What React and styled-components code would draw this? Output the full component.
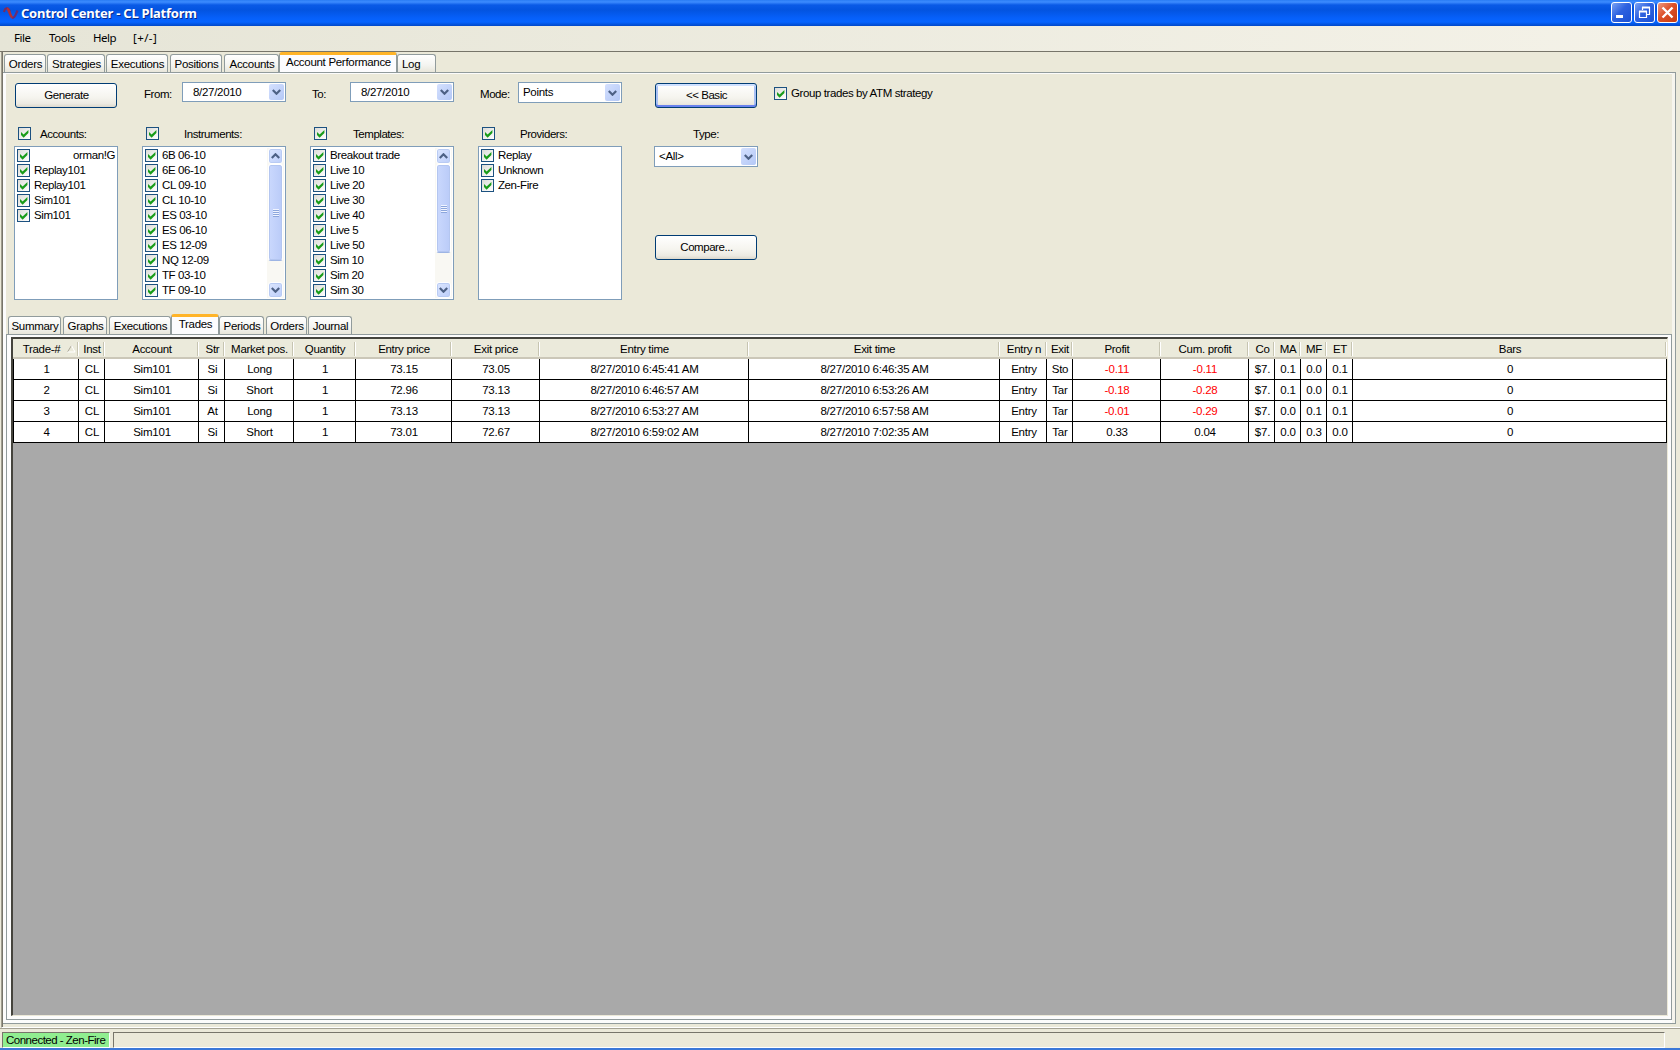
import React, {useState} from "react";
import styled, {createGlobalStyle, css} from "styled-components";

const topTabs = [
    {label: "Orders", width: 42, gap: 1},
    {label: "Strategies", width: 58, gap: 1},
    {label: "Executions", width: 62, gap: 2},
    {label: "Positions", width: 52, gap: 2},
    {label: "Accounts", width: 55, gap: 0},
    {label: "Account Performance", width: 118, gap: 0},
    {label: "Log", width: 39, gap: 0, left: true},
];

const reportTabs = [
    {label: "Summary", width: 53, gap: 2},
    {label: "Graphs", width: 44, gap: 2},
    {label: "Executions", width: 62, gap: 0},
    {label: "Trades", width: 48, gap: 0},
    {label: "Periods", width: 45, gap: 2},
    {label: "Orders", width: 41, gap: 1},
    {label: "Journal", width: 44, gap: 0},
];

const accounts = ["orman!G", "Replay101", "Replay101", "Sim101", "Sim101"];
const instruments = [
    "6B 06-10", "6E 06-10", "CL 09-10", "CL 10-10", "ES 03-10",
    "ES 06-10", "ES 12-09", "NQ 12-09", "TF 03-10", "TF 09-10",
];
const templates = [
    "Breakout trade", "Live 10", "Live 20", "Live 30", "Live 40",
    "Live 5", "Live 50", "Sim 10", "Sim 20", "Sim 30",
];
const providers = ["Replay", "Unknown", "Zen-Fire"];

const columns = [
    {label: "Trade-#", width: 65, sorted: true},
    {label: "Inst", width: 26},
    {label: "Account", width: 94},
    {label: "Str", width: 26, shift: 1},
    {label: "Market pos.", width: 69},
    {label: "Quantity", width: 62},
    {label: "Entry price", width: 96},
    {label: "Exit price", width: 88},
    {label: "Entry time", width: 209},
    {label: "Exit time", width: 251},
    {label: "Entry n", width: 47, shift: 1},
    {label: "Exit", width: 26, shift: 0},
    {label: "Profit", width: 88},
    {label: "Cum. profit", width: 88},
    {label: "Co", width: 26, shift: 1},
    {label: "MA", width: 26},
    {label: "MF", width: 26},
    {label: "ET", width: 26},
    {label: "Bars", width: 314},
];

const trades = [
    ["1", "CL", "Sim101", "Si", "Long", "1", "73.15", "73.05", "8/27/2010 6:45:41 AM", "8/27/2010 6:46:35 AM", "Entry", "Sto", "-0.11", "-0.11", "$7.", "0.1", "0.0", "0.1", "0"],
    ["2", "CL", "Sim101", "Si", "Short", "1", "72.96", "73.13", "8/27/2010 6:46:57 AM", "8/27/2010 6:53:26 AM", "Entry", "Tar", "-0.18", "-0.28", "$7.", "0.1", "0.0", "0.1", "0"],
    ["3", "CL", "Sim101", "At", "Long", "1", "73.13", "73.13", "8/27/2010 6:53:27 AM", "8/27/2010 6:57:58 AM", "Entry", "Tar", "-0.01", "-0.29", "$7.", "0.0", "0.1", "0.1", "0"],
    ["4", "CL", "Sim101", "Si", "Short", "1", "73.01", "72.67", "8/27/2010 6:59:02 AM", "8/27/2010 7:02:35 AM", "Entry", "Tar", "0.33", "0.04", "$7.", "0.0", "0.3", "0.0", "0"],
];

function Check({defaultChecked = true}) {
    const [checked, setChecked] = useState(defaultChecked);

    return (
        <CheckBox role="checkbox" aria-checked={checked} onClick={() => setChecked(!checked)}>
            {checked && (
                <svg width="9" height="9" viewBox="0 0 9 9">
                    <path d="M1 3v3l2.6 2.8L8.4 4V0.9L3.6 5.5z" fill="#1a9c1a"/>
                </svg>
            )}
        </CheckBox>
    );
}

function Chevron({up}) {
    return (
        <svg width="9" height="6" viewBox="0 0 9 6">
            <path d={up ? "M0.8 5L4.5 1.3L8.2 5" : "M0.8 1L4.5 4.7L8.2 1"} fill="none" stroke="#4d6185" strokeWidth="2.2"/>
        </svg>
    );
}

function Select({value, indent, height}) {
    return (
        <SelectBox $height={height}>
            <SelectValue $indent={indent}>{value}</SelectValue>
            <SelectArrow><Chevron/></SelectArrow>
        </SelectBox>
    );
}

function CheckList({items, width, thumb, masked}) {
    return (
        <ListBox $width={width}>
            <ListItems>
                {items.map((item, i) => (
                    <ListItem key={i} $masked={masked && i === 0}>
                        <Check/>
                        <ItemText>{item}</ItemText>
                    </ListItem>
                ))}
            </ListItems>
            {thumb && (
                <ScrollTrack>
                    <ScrollButton><Chevron up/></ScrollButton>
                    <ScrollThumb $height={thumb}><Grip/></ScrollThumb>
                    <ScrollSpace/>
                    <ScrollButton><Chevron/></ScrollButton>
                </ScrollTrack>
            )}
        </ListBox>
    );
}

function Tabs({tabs, active, onChange}) {
    return (
        <TabStrip>
            {tabs.map((tab) => (
                <Tab
                    key={tab.label}
                    $width={tab.width}
                    $gap={tab.gap}
                    $left={tab.left}
                    $active={tab.label === active}
                    onClick={() => onChange(tab.label)}
                >
                    {tab.label}
                </Tab>
            ))}
        </TabStrip>
    );
}

function App() {
    const [tab, setTab] = useState("Account Performance");
    const [report, setReport] = useState("Trades");

    return (
        <Window>
            <GlobalStyle/>
            <TitleBar>
                <svg width="16" height="14" viewBox="0 0 16 14">
                    <path d="M1 6C2 1.5 5 0.5 7 5.5" fill="none" stroke="#7a2a5c" strokeWidth="2"/>
                    <path d="M4 2.5C6.5 3 7 11.5 10 11.8" fill="none" stroke="#b03038" strokeWidth="2.6"/>
                    <path d="M9.5 11.8C12 12 12.5 9 14.5 4.5" fill="none" stroke="#6a2c72" strokeWidth="2.2"/>
                </svg>
                <Title>Control Center - CL Platform</Title>
                <WindowButton>
                    <svg width="19" height="19" viewBox="0 0 19 19">
                        <rect x="4" y="12" width="7" height="3" fill="#fff"/>
                    </svg>
                </WindowButton>
                <WindowButton>
                    <svg width="19" height="19" viewBox="0 0 19 19" fill="none" stroke="#fff">
                        <path d="M7.5 7V4.5H14.5V11.5H12" strokeWidth="1.2"/>
                        <path d="M7 4.5H15" strokeWidth="2"/>
                        <path d="M4.5 8.5H11.5V14.5H4.5z" strokeWidth="1.2"/>
                        <path d="M4 8.5H12" strokeWidth="2"/>
                    </svg>
                </WindowButton>
                <WindowButton $close>
                    <svg width="19" height="19" viewBox="0 0 19 19">
                        <path d="M4.5 4.5L14.5 14.5M14.5 4.5L4.5 14.5" stroke="#fff" strokeWidth="2.4"/>
                    </svg>
                </WindowButton>
            </TitleBar>
            <MenuBar>
                <MenuItem $width={35}>File</MenuItem>
                <MenuItem $width={44}>Tools</MenuItem>
                <MenuItem $width={40}>Help</MenuItem>
                <MenuItem $width={40} $wide>[+/-]</MenuItem>
            </MenuBar>

            <Main>
                <Tabs tabs={topTabs} active={tab} onChange={setTab}/>
                <Page>
                    <Filters>
                        <FilterColumn $width={104}>
                            <ControlRow $inset><Button>Generate</Button></ControlRow>
                            <LabelRow $indent={9}><Check/><span>Accounts:</span></LabelRow>
                            <CheckList items={accounts} width={104} masked/>
                        </FilterColumn>
                        <FilterColumn $width={144}>
                            <ControlRow><Caption>From:</Caption><Select value="8/27/2010" indent={9} height={20}/></ControlRow>
                            <LabelRow $indent={25}><Check/><span>Instruments:</span></LabelRow>
                            <CheckList items={instruments} width={144} thumb={97}/>
                        </FilterColumn>
                        <FilterColumn $width={144}>
                            <ControlRow><Caption>To:</Caption><Select value="8/27/2010" indent={9} height={20}/></ControlRow>
                            <LabelRow $indent={26}><Check/><span>Templates:</span></LabelRow>
                            <CheckList items={templates} width={144} thumb={89}/>
                        </FilterColumn>
                        <FilterColumn $width={144}>
                            <ControlRow><Caption>Mode:</Caption><Select value="Points" indent={3} height={21}/></ControlRow>
                            <LabelRow $indent={25}><Check/><span>Providers:</span></LabelRow>
                            <CheckList items={providers} width={144}/>
                        </FilterColumn>
                        <FilterColumn $width={104} $gap={32}>
                            <ControlRow $inset><Button $focused>&lt;&lt; Basic</Button></ControlRow>
                            <TypeLabel>Type:</TypeLabel>
                            <Select value="<All>" indent={3} height={21}/>
                            <CompareRow><Button>Compare...</Button></CompareRow>
                        </FilterColumn>
                        <GroupOption><Check/><ItemText>Group trades by ATM strategy</ItemText></GroupOption>
                    </Filters>

                    <Tabs tabs={reportTabs} active={report} onChange={setReport}/>
                    <ReportPage>
                        <Grid>
                            <HeaderRow>
                                {columns.map((col) => (
                                    <HeaderCell key={col.label} $width={col.width} $shift={col.shift} $sorted={col.sorted}>
                                        {col.label}
                                        {col.sorted && (
                                            <svg width="9" height="8" viewBox="0 0 9 8">
                                                <path d="M0.5 7L4.5 0.5" stroke="#aca899" fill="none"/>
                                                <path d="M4.5 0.5L8 7H0.5" stroke="#fff" fill="none"/>
                                            </svg>
                                        )}
                                    </HeaderCell>
                                ))}
                            </HeaderRow>
                            {trades.map((trade) => (
                                <Row key={trade[0]}>
                                    {trade.map((value, i) => (
                                        <Cell key={i} $width={columns[i].width} $shift={columns[i].shift} $loss={value.startsWith("-")}>
                                            {value}
                                        </Cell>
                                    ))}
                                </Row>
                            ))}
                        </Grid>
                    </ReportPage>
                </Page>
            </Main>

            <StatusBar>
                <Connection>Connected - Zen-Fire</Connection>
                <StatusSpace/>
            </StatusBar>
        </Window>
    );
}

export default App;

const GlobalStyle = createGlobalStyle`
    * {
        box-sizing: border-box;
    }

    body {
        margin: 0;
        background: #ece9d8;
    }

    svg {
        display: block;
        flex: none;
    }
`;

const Window = styled.div`
    display: flex;
    flex-direction: column;
    width: 1680px;
    height: 1050px;
    overflow: hidden;
    background: #ebe9d9;
    border-bottom: 2px solid #3b78d8;
    font-family: "Liberation Sans", Arial, sans-serif;
    font-size: 11.5px;
    letter-spacing: -0.45px;
    line-height: 14px;
    color: #000;
    white-space: nowrap;
    cursor: default;
    user-select: none;
`;

const TitleBar = styled.header`
    display: flex;
    align-items: center;
    flex: none;
    gap: 2px;
    height: 26px;
    padding: 0 2px 1px 3px;
    background: linear-gradient(#2a7cf4 0, #3d8cff 2px, #0a5ae6 5px, #0354e0 10px, #0660fa 18px, #0664ff 22px, #0148c8 26px);
`;

const Title = styled.h1`
    flex: 1;
    margin: 0;
    font: bold 13px/16px "Noto Sans", sans-serif;
    letter-spacing: -0.23px;
    color: #fff;
    text-shadow: 1px 1px #0a2a8c;
`;

const WindowButton = styled.div`
    width: 21px;
    height: 21px;
    border: 1px solid #fff;
    border-radius: 3px;
    background: ${({$close}) => $close
        ? "linear-gradient(135deg, #ee9a80, #dc5028 45%, #c83c10)"
        : "linear-gradient(135deg, #7aa2f4, #2e62e0 45%, #1a50d4)"};
`;

const MenuBar = styled.nav`
    display: flex;
    align-items: center;
    flex: none;
    height: 26px;
    padding: 0 0 1px 14px;
    border-bottom: 1px solid #77756a;
    background: linear-gradient(90deg, #e6e5d7, #f4f2e8);
    font-family: "Noto Sans", sans-serif;
`;

const MenuItem = styled.span`
    width: ${({$width}) => $width}px;
    letter-spacing: ${({$wide}) => ($wide ? "0.4px" : "-0.45px")};
`;

const Main = styled.main`
    display: flex;
    flex-direction: column;
    flex: 1;
    min-height: 0;
    margin-left: 1px;
    padding-right: 4px;
    padding-bottom: 3px;
    border-left: 1px solid #a09d8f;
    border-bottom: 1px solid #fff;
    box-shadow: inset 1px 0 #77756a;
`;

const TabStrip = styled.div`
    display: flex;
    align-items: flex-end;
    flex: none;
    height: 20px;
    padding-left: 2px;
`;

const Tab = styled.div`
    width: ${({$width}) => $width}px;
    height: 18px;
    margin-right: ${({$gap}) => $gap}px;
    padding: ${({$left}) => ($left ? "2px 0 0 4px" : "2px 0 0 1px")};
    border: 1px solid #919b9c;
    border-bottom: none;
    border-radius: 3px 3px 0 0;
    background: linear-gradient(#fff, #f4f4f0 60%, #e8e6da);
    letter-spacing: -0.3px;
    text-align: ${({$left}) => ($left ? "left" : "center")};

    ${({$active}) => $active && css`
        height: 21px;
        margin-bottom: -1px;
        padding-top: 0;
        border-top: 3px solid #ffb428;
        background: #fcfcfe;
    `}
`;

const Page = styled.section`
    display: flex;
    flex-direction: column;
    flex: 1;
    min-height: 0;
    margin-left: 1px;
    padding: 1px 3px 3px;
    border: 1px solid #919b9c;
    border-left: none;
    box-shadow: inset 3px 0 #fcfcfc, inset -3px 0 #f6f5ee, inset 0 -3px #fcfcfc, inset 0 1px #fcfcfc;
`;

const Filters = styled.div`
    display: flex;
    align-items: flex-start;
    flex: none;
    height: 240px;
    padding: 8px 0 0 8px;
`;

const FilterColumn = styled.div`
    display: flex;
    flex-direction: column;
    width: ${({$width}) => $width}px;
    margin-left: ${({$gap}) => $gap || 24}px;

    &:first-child {
        margin-left: 0;
    }
`;

const ControlRow = styled.div`
    display: flex;
    align-items: flex-start;
    height: 45px;
    padding: ${({$inset}) => ($inset ? "1px 1px 0" : "0 0 0 2px")};
`;

const Caption = styled.label`
    width: 38px;
    padding-top: 5px;
`;

const Button = styled.button`
    width: 102px;
    height: 25px;
    padding: 0 0 2px 1px;
    border: 1px solid #003c74;
    border-radius: 3px;
    background: linear-gradient(#fff, #f5f4ee 60%, #eceae2 85%, #dcd8cc);
    font: inherit;
    letter-spacing: inherit;
    color: #000;

    ${({$focused}) => $focused && css`
        box-shadow: inset 0 2px #cee0ff, inset 0 -2px #6982ee, inset 2px 0 #a8c0f4, inset -2px 0 #a8c0f4;
    `}
`;

const SelectBox = styled.div`
    display: flex;
    flex: none;
    width: 104px;
    height: ${({$height}) => $height}px;
    padding: 1px;
    border: 1px solid #7f9db9;
    background: #fff;
`;

const SelectValue = styled.span`
    flex: 1;
    padding: 1px 0 0 ${({$indent}) => $indent}px;
    letter-spacing: -0.3px;
`;

const SelectArrow = styled.span`
    display: flex;
    align-items: center;
    justify-content: center;
    width: 15px;
    border-radius: 2px;
    background: linear-gradient(135deg, #d4e0fe, #b4c8f6);
`;

const LabelRow = styled.div`
    display: flex;
    align-items: center;
    gap: ${({$indent}) => $indent}px;
    height: 13px;
    margin-bottom: 6px;
    padding-left: 4px;
`;

const CheckBox = styled.span`
    display: flex;
    align-items: center;
    justify-content: center;
    flex: none;
    width: 13px;
    height: 13px;
    border: 1px solid #1c5180;
    background: linear-gradient(135deg, #dcdcd7, #fff);
`;

const ListBox = styled.div`
    display: flex;
    width: ${({$width}) => $width}px;
    height: 154px;
    padding: 1px;
    border: 1px solid #7f9db9;
    background: #fff;
`;

const ListItems = styled.div`
    flex: 1;
    padding: 1px 0 0 1px;
`;

const ListItem = styled.div`
    display: flex;
    align-items: flex-start;
    gap: 4px;
    height: 15px;

    ${({$masked}) => $masked && css`
        justify-content: space-between;
        padding-right: 1px;
    `}
`;

const ItemText = styled.span`
    margin-top: -1px;
    letter-spacing: -0.4px;
`;

const ScrollTrack = styled.div`
    display: flex;
    flex-direction: column;
    width: 17px;
    padding: 0 1px;
    background: #f9f8f3;
`;

const ScrollButton = styled.div`
    display: flex;
    align-items: center;
    justify-content: center;
    flex: none;
    height: 16px;
    border: 1px solid #fff;
    border-radius: 3px;
    box-shadow: inset 0 0 0 1px #b9cbf3;
    background: linear-gradient(135deg, #dce6fe, #bccefa);
`;

const ScrollThumb = styled.div`
    display: flex;
    align-items: center;
    justify-content: center;
    flex: none;
    height: ${({$height}) => $height}px;
    border: 1px solid #fff;
    border-bottom-color: #9db4e4;
    border-radius: 3px;
    box-shadow: inset 0 0 0 1px #b4c6f0;
    background: linear-gradient(90deg, #cad8fd, #bacbf8);
`;

const Grip = styled.div`
    width: 6px;
    height: 8px;
    background: repeating-linear-gradient(#f0f4ff 0 1px, #8ca6dc 1px 2px);
`;

const ScrollSpace = styled.div`
    flex: 1;
`;

const TypeLabel = styled.div`
    height: 19px;
    text-align: center;
`;

const CompareRow = styled.div`
    margin-top: 68px;
    padding: 0 1px;
`;

const GroupOption = styled.div`
    display: flex;
    align-items: center;
    gap: 4px;
    height: 13px;
    margin: 5px 0 0 16px;
`;

const ReportPage = styled.section`
    flex: 1;
    min-height: 0;
    padding: 2px 3px 3px 4px;
    border: 1px solid #919b9c;
    background: #fcfcfc;
`;

const Grid = styled.div`
    height: 100%;
    border-style: solid;
    border-width: 2px 1px 1px 2px;
    border-color: #45443d #ece9d8 #ece9d8 #45443d;
    background: #a9a9a9;
`;

const HeaderRow = styled.div`
    display: flex;
    height: 20px;
    padding-left: 1px;
    border-bottom: 2px solid #cbc7b8;
    background: #ebeadb;
`;

const HeaderCell = styled.div`
    display: flex;
    align-items: center;
    justify-content: center;
    flex: none;
    gap: 7px;
    width: ${({$width}) => $width}px;
    height: 14px;
    margin-top: 3px;
    padding-left: ${({$shift = 0, $sorted}) => ($sorted ? 7 : $shift + 1)}px;
    border-right: 1px solid #fff;
    box-shadow: inset -1px 0 #c7c5b2;
    letter-spacing: -0.3px;
`;

const Row = styled.div`
    display: flex;
    height: 21px;
    border-left: 1px solid #000;
    border-bottom: 1px solid #000;
    background: #fff;
`;

const Cell = styled.div`
    flex: none;
    width: ${({$width}) => $width}px;
    padding: 3px 0 0 ${({$shift = 0}) => $shift + 1}px;
    border-right: 1px solid #000;
    overflow: hidden;
    text-align: center;
    letter-spacing: -0.22px;
    color: ${({$loss}) => ($loss ? "#f00" : "#000")};
`;

const StatusBar = styled.footer`
    display: flex;
    flex: none;
    gap: 3px;
    height: 20px;
    padding: 3px 15px 0 2px;
    border-top: 1px solid #a5a294;
`;

const Connection = styled.div`
    width: 108px;
    padding-left: 3px;
    border: 1px solid #fff;
    border-top-color: #77756a;
    border-left-color: #77756a;
    background: #90ee90;
    letter-spacing: -0.5px;
`;

const StatusSpace = styled.div`
    flex: 1;
    border: 1px solid #fff;
    border-top-color: #77756a;
    border-left-color: #77756a;
`;
